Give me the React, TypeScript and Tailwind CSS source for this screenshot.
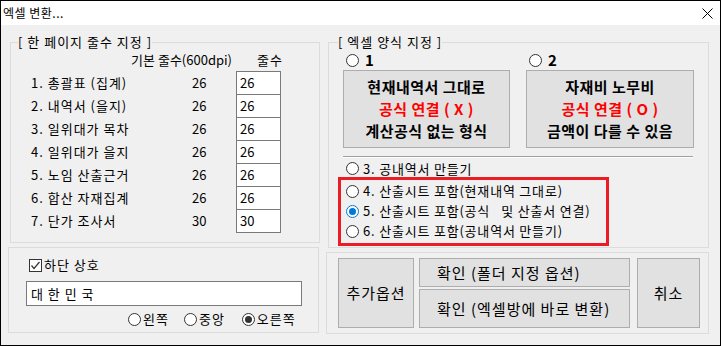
import React from "react";

const rows = [
  { label: "1. 총괄표 (집계)", base: 26, value: "26" },
  { label: "2. 내역서 (을지)", base: 26, value: "26" },
  { label: "3. 일위대가 목차", base: 26, value: "26" },
  { label: "4. 일위대가 을지", base: 26, value: "26" },
  { label: "5. 노임 산출근거", base: 26, value: "26" },
  { label: "6. 합산 자재집계", base: 26, value: "26" },
  { label: "7. 단가 조사서", base: 30, value: "30" },
];

const Radio: React.FC<{ checked?: boolean; blue?: boolean }> = ({ checked, blue }) => {
  return (
    <span
      className={
        blue
          ? "flex items-center justify-center w-[13px] h-[13px] rounded-full border border-[#0078d7] bg-white shrink-0"
          : "flex items-center justify-center w-[13px] h-[13px] rounded-full border border-[#333333] bg-white shrink-0"
      }
    >
      {checked && blue && <span className="w-[7px] h-[7px] rounded-full bg-[#0078d7]" />}
      {checked && !blue && <span className="w-[7px] h-[7px] rounded-full bg-[#333333]" />}
    </span>
  );
};

const App: React.FC = () => {
  return (
    <div className="w-[721px] h-[346px] border border-black flex flex-col bg-[#f0f0f0] text-black font-['Noto_Sans_CJK_KR','Noto_Sans',sans-serif] overflow-hidden">
      {/* Title bar */}
      <div className="h-[24px] bg-white flex items-center justify-between shrink-0">
        <span className="pl-[2px] text-[12px] leading-[16px] tracking-[0.5px]">엑셀 변환...</span>
        <svg width="11" height="11" viewBox="0 0 11 11" className="mr-[7px]">
          <path d="M0.5 0.5 L10.5 10.5 M10.5 0.5 L0.5 10.5" stroke="#000" strokeWidth="1" />
        </svg>
      </div>

      {/* Body */}
      <div className="flex flex-1 pl-[7px] gap-[6px]">
        {/* Left column */}
        <div className="w-[312px] flex flex-col">
          <fieldset className="ml-[2px] mt-[9px] w-[310px] h-[209px] border border-[#dcdcdc]">
            <legend className="ml-[7px] text-[13px] leading-[16px] tracking-[1px]">[ 한 페이지 줄수 지정 ]</legend>
            <div className="flex h-[16px] mt-[2px] text-[13px] leading-[16px]">
              <span className="w-[221px] text-right">기본 줄수(600dpi)</span>
              <span className="w-[66px] text-center pl-[10px] tracking-[1px]">줄수</span>
            </div>
            <div className="flex flex-col mt-[3px] pl-[20px]">
              {rows.map((r) => (
                <div key={r.label} className="flex items-center h-[23px] text-[13px] leading-[16px]">
                  <span className="w-[161px] tracking-[1px]">{r.label}</span>
                  <span className="w-[44px]">{r.base}</span>
                  <div className="self-start w-[45px] h-[24px] border border-[#7a7a7a] bg-white pl-[3px] flex items-center">
                    {r.value}
                  </div>
                </div>
              ))}
            </div>
          </fieldset>

          <div className="mt-[4px] w-[311px] h-[86px] border border-[#dcdcdc] pl-[17px] pt-[10px] text-[13px] leading-[16px]">
            <div className="flex items-center ml-[3px] h-[14px]">
              <span className="w-[13px] h-[13px] border border-[#333333] bg-white flex items-center justify-center">
                <svg width="11" height="11" viewBox="0 0 11 11">
                  <path d="M1.5 5.5 L4 8.5 L9.5 2" stroke="#333" strokeWidth="1.2" fill="none" />
                </svg>
              </span>
              <span className="ml-[2px] tracking-[1px]">하단 상호</span>
            </div>
            <div className="mt-[9px] w-[276px] h-[25px] border border-[#7a7a7a] bg-white pl-[4px] flex items-center tracking-[1px]">
              대 한 민 국
            </div>
            <div className="flex items-center mt-[6px] ml-[102px] h-[14px] tracking-[1px]">
              <Radio />
              <span className="ml-[2px]">왼쪽</span>
              <span className="ml-[15px]">
                <Radio />
              </span>
              <span className="ml-[2px]">중앙</span>
              <span className="ml-[17px]">
                <Radio checked />
              </span>
              <span className="ml-[2px]">오른쪽</span>
            </div>
          </div>
        </div>

        {/* Right column */}
        <div className="w-[383px] flex flex-col">
          <fieldset className="ml-[2px] mt-[9px] w-[381px] h-[214px] border border-[#dcdcdc]">
            <legend className="ml-[9px] text-[13px] leading-[16px] tracking-[1px]">[ 엑셀 양식 지정 ]</legend>
            <div className="flex gap-[16px] ml-[14px] mt-[2px]">
              <div className="w-[167px] flex flex-col">
                <div className="flex items-center h-[16px] ml-[3px]">
                  <Radio />
                  <span className="ml-[6px] text-[15px] font-bold leading-[16px]">1</span>
                </div>
                <div className="mt-[2px] h-[78px] bg-[#e1e1e1] border border-[#adadad] flex flex-col items-center justify-center text-[15px] font-bold leading-[22px] tracking-[0.5px]">
                  <span>현재내역서 그대로</span>
                  <span className="text-[#ff0000]">공식 연결 ( X )</span>
                  <span>계산공식 없는 형식</span>
                </div>
              </div>
              <div className="w-[168px] flex flex-col">
                <div className="flex items-center h-[16px] ml-[3px]">
                  <Radio />
                  <span className="ml-[6px] text-[15px] font-bold leading-[16px]">2</span>
                </div>
                <div className="mt-[2px] h-[78px] bg-[#e1e1e1] border border-[#adadad] flex flex-col items-center justify-center text-[15px] font-bold leading-[22px] tracking-[0.5px]">
                  <span>자재비 노무비</span>
                  <span className="text-[#ff0000]">공식 연결 ( O )</span>
                  <span>금액이 다를 수 있음</span>
                </div>
              </div>
            </div>
            <div className="ml-[14px] mt-[8px] w-[350px] h-[2px] border-t border-[#a0a0a0] border-b border-b-white" />
            <div className="flex items-center ml-[17px] h-[19px] pt-[2px] text-[13px] leading-[16px] tracking-[0.8px]">
              <Radio />
              <span className="ml-[4px]">3. 공내역서 만들기</span>
            </div>
            <div className="ml-[9px] w-[271px] h-[69px] border-[3px] border-[#ec1c24] pl-[5px] pt-[1px] text-[13px] leading-[16px] tracking-[0.8px]">
              <div className="flex items-center h-[20px]">
                <Radio />
                <span className="ml-[4px]">4. 산출시트 포함(현재내역 그대로)</span>
              </div>
              <div className="flex items-center h-[20px]">
                <Radio checked blue />
                <span className="ml-[4px] whitespace-pre">5. 산출시트 포함(공식   및 산출서 연결)</span>
              </div>
              <div className="flex items-center h-[20px]">
                <Radio />
                <span className="ml-[4px]">6. 산출시트 포함(공내역서 만들기)</span>
              </div>
            </div>
          </fieldset>

          <div className="mt-[4px] w-[383px] h-[82px] border border-[#dcdcdc] pl-[11px] pt-[5px] flex text-[15px] leading-[18px] tracking-[1px]">
            <div className="w-[76px] h-[70px] bg-[#e1e1e1] border border-[#adadad] flex items-center justify-center">
              추가옵션
            </div>
            <div className="ml-[5px] w-[211px] flex flex-col gap-[2px]">
              <div className="h-[29px] bg-[#e1e1e1] border border-[#adadad] flex items-center pl-[17px]">
                확인 (폴더 지정 옵션)
              </div>
              <div className="h-[39px] bg-[#e1e1e1] border border-[#adadad] flex items-center pl-[17px]">
                확인 (엑셀방에 바로 변환)
              </div>
            </div>
            <div className="ml-[7px] w-[63px] h-[70px] bg-[#e1e1e1] border border-[#adadad] flex items-center justify-center">
              취소
            </div>
          </div>
        </div>
      </div>
    </div>
  );
};

export default App;
